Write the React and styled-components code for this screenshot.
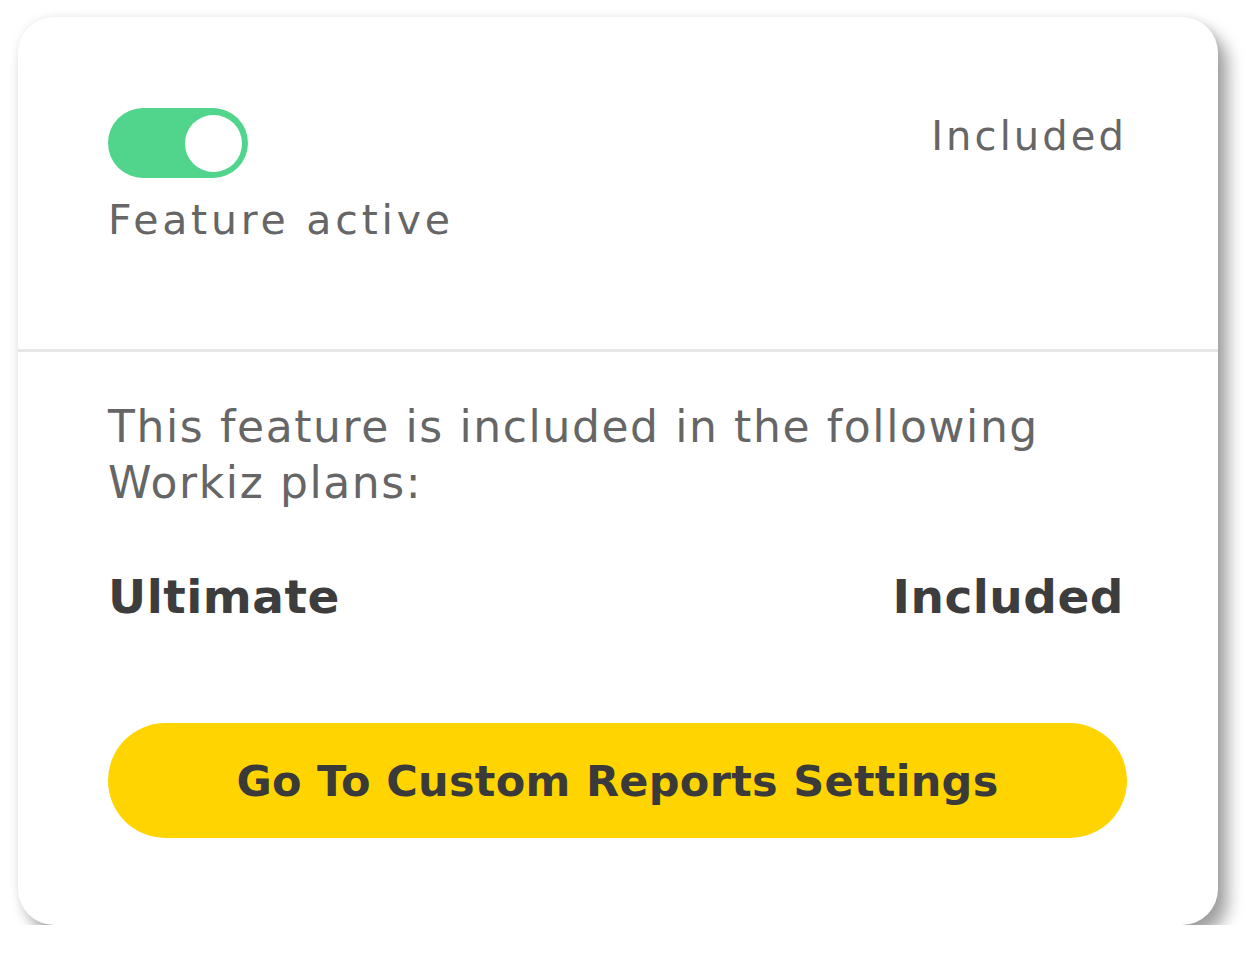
import styled, { createGlobalStyle } from "styled-components";

const GlobalStyle = createGlobalStyle`
  body {
    margin: 0;
    background: #ffffff;
    font-family: "DejaVu Sans", "Noto Sans", sans-serif;
  }
`;

export default function App() {
  return (
    <>
      <GlobalStyle />
      <SCPage>
        <SCCard>
          <SCTop>
            <SCStatus>
              <SCToggle $on>
                <SCKnob />
              </SCToggle>
              <SCLabel>Feature active</SCLabel>
            </SCStatus>
            <SCTopValue>Included</SCTopValue>
          </SCTop>
          <SCDivider />
          <SCBottom>
            <SCText>
              This feature is included in the following
              <br />
              Workiz plans:
            </SCText>
            <SCPlanRow>
              <SCPlanName>Ultimate</SCPlanName>
              <SCPlanName>Included</SCPlanName>
            </SCPlanRow>
            <SCButton>Go To Custom Reports Settings</SCButton>
          </SCBottom>
        </SCCard>
      </SCPage>
    </>
  );
}

const SCPage = styled.div`
  padding: 17px 0 0 18px;
`;

const SCCard = styled.div`
  width: 1200px;
  height: 908px;
  box-sizing: border-box;
  background: #ffffff;
  border-radius: 36px;
  box-shadow: 10px 12px 16px rgba(0, 0, 0, 0.36), 0 0 10px rgba(0, 0, 0, 0.08);
  display: flex;
  flex-direction: column;
  overflow: hidden;
`;

const SCTop = styled.div`
  height: 332px;
  box-sizing: border-box;
  padding: 91px 94px 0 90px;
  display: flex;
  justify-content: space-between;
  align-items: flex-start;
`;

const SCStatus = styled.div`
  display: flex;
  flex-direction: column;
  align-items: flex-start;
`;

const SCToggle = styled.div`
  width: 140px;
  height: 70px;
  border-radius: 35px;
  background: #51d58d;
  display: flex;
  align-items: center;
  justify-content: ${(p) => (p.$on ? "flex-end" : "flex-start")};
  padding: 0 6px;
  box-sizing: border-box;
`;

const SCKnob = styled.div`
  width: 57px;
  height: 57px;
  border-radius: 50%;
  background: #ffffff;
`;

const SCLabel = styled.div`
  margin-top: 18px;
  font-size: 41px;
  line-height: 48px;
  color: #666666;
  letter-spacing: 3.8px;
`;

const SCTopValue = styled.div`
  margin-top: 4px;
  margin-right: -3px;
  font-size: 40px;
  line-height: 48px;
  color: #666666;
  letter-spacing: 3.1px;
`;

const SCDivider = styled.div`
  height: 3px;
  background: #e6e6e6;
`;

const SCBottom = styled.div`
  flex: 1;
  padding: 47px 91px 0 90px;
  display: flex;
  flex-direction: column;
`;

const SCText = styled.p`
  margin: 0;
  font-size: 44px;
  line-height: 56px;
  color: #666666;
  letter-spacing: 1.6px;
`;

const SCPlanRow = styled.div`
  margin-top: 57px;
  display: flex;
  justify-content: space-between;
  padding-right: 3px;
`;

const SCPlanName = styled.div`
  font-size: 47px;
  line-height: 58px;
  font-weight: 700;
  color: #3d3d3d;
  letter-spacing: 0.5px;
`;

const SCButton = styled.button`
  margin-top: 97px;
  height: 115px;
  width: 100%;
  border: none;
  border-radius: 58px;
  background: #ffd400;
  font-family: "DejaVu Sans", "Noto Sans", sans-serif;
  font-size: 43px;
  font-weight: 700;
  color: #3a3a3a;
  letter-spacing: 0.3px;
  cursor: pointer;
`;
